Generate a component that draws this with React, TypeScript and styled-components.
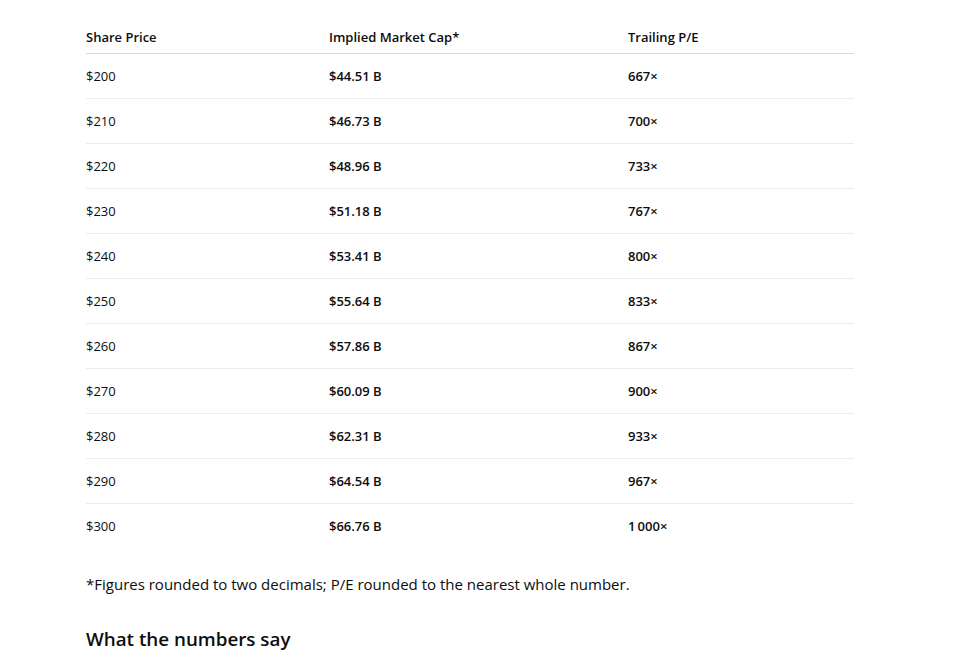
import React from "react";
import styled, { createGlobalStyle } from "styled-components";

const GlobalStyle = createGlobalStyle`
  html, body { margin: 0; padding: 0; background: #ffffff; }
  body {
    font-family: "Open Sans", "Noto Sans", sans-serif;
    color: #0d0d0d;
    -webkit-font-smoothing: antialiased;
  }
`;

const Page = styled.main`
  padding: 21px 0 0 86px;
  width: 768px;
`;

const Table = styled.table`
  width: 768px;
  border-collapse: collapse;
  table-layout: fixed;
  font-size: 13px;
  line-height: 20px;
`;

const HeadCell = styled.th<{ $w: number }>`
  width: ${(p) => p.$w}px;
  text-align: left;
  font-weight: 600;
  padding: 6px 0 6px 0;
  border-bottom: 1px solid #d9d9d9;
`;

const Row = styled.tr<{ $last: boolean }>`
  border-bottom: ${(p) => (p.$last ? "none" : "1px solid #ececec")};
`;

const Cell = styled.td<{ $bold?: boolean }>`
  padding: 12px 0;
  font-weight: ${(p) => (p.$bold ? 600 : 400)};
  white-space: nowrap;
`;

const Footnote = styled.p`
  margin: 24px 0 0;
  font-size: 15px;
  line-height: 24px;
`;

const Heading = styled.h3`
  margin: 30px 0 0;
  font-size: 18.8px;
  line-height: 26px;
  font-weight: 600;
`;

const rows: [string, string, string][] = [
  ["$200", "$44.51 B", "667×"],
  ["$210", "$46.73 B", "700×"],
  ["$220", "$48.96 B", "733×"],
  ["$230", "$51.18 B", "767×"],
  ["$240", "$53.41 B", "800×"],
  ["$250", "$55.64 B", "833×"],
  ["$260", "$57.86 B", "867×"],
  ["$270", "$60.09 B", "900×"],
  ["$280", "$62.31 B", "933×"],
  ["$290", "$64.54 B", "967×"],
  ["$300", "$66.76 B", "1\u2009000×"],
];

export default function App() {
  return (
    <>
      <GlobalStyle />
      <Page>
        <Table>
          <thead>
            <tr>
              <HeadCell $w={243}>Share Price</HeadCell>
              <HeadCell $w={299}>Implied Market Cap*</HeadCell>
              <HeadCell $w={226}>Trailing P/E</HeadCell>
            </tr>
          </thead>
          <tbody>
            {rows.map((r, i) => (
              <Row key={r[0]} $last={i === rows.length - 1}>
                <Cell>{r[0]}</Cell>
                <Cell $bold>{r[1]}</Cell>
                <Cell $bold>{r[2]}</Cell>
              </Row>
            ))}
          </tbody>
        </Table>
        <Footnote>*Figures rounded to two decimals; P/E rounded to the nearest whole number.</Footnote>
        <Heading>What the numbers say</Heading>
      </Page>
    </>
  );
}
